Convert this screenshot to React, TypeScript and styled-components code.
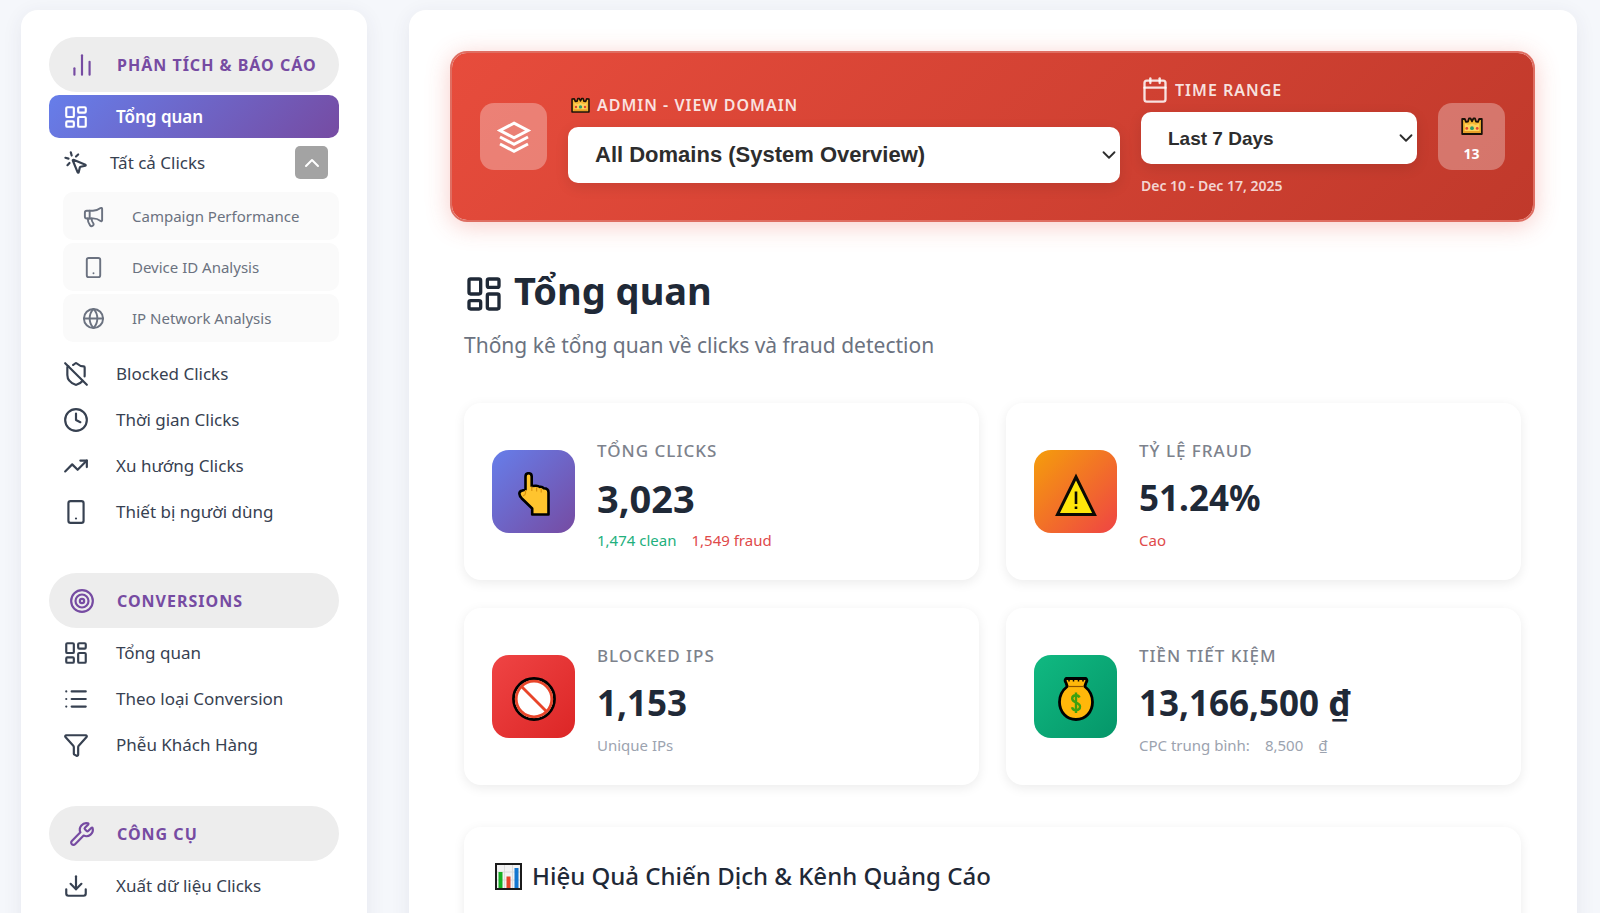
import React, { useState } from "react";
import styled, { createGlobalStyle, css } from "styled-components";
import {
  Calendar,
  ChartNoAxesColumn,
  ChevronDown,
  ChevronUp,
  Clock,
  Download,
  Funnel,
  Globe,
  LayoutDashboard,
  List,
  Megaphone,
  MousePointerClick,
  ShieldOff,
  Smartphone,
  Target,
  TrendingUp,
  Wrench,
} from "lucide-react";

const sans = `"Noto Sans", "Open Sans", sans-serif`;

const GlobalStyle = createGlobalStyle`
  *, *::before, *::after { box-sizing: border-box; }
  html, body { margin: 0; }
  body {
    background: #f5f7fb;
    color: #1f2937;
    font-family: ${sans};
    font-size: 16px;
  }
  ul, h1, h2, h3, p { margin: 0; padding: 0; }
  ul { list-style: none; }
`;

const Page = styled.div`
  display: flex;
  align-items: stretch;
  gap: 42px;
  min-height: 100vh;
  padding: 10px 23px 0 21px;
`;

const panel = css`
  background: #fff;
  border-radius: 17px 17px 0 0;
  box-shadow: 0 4px 20px rgba(50, 50, 90, 0.08);
`;

const Sidebar = styled.nav`
  ${panel}
  flex: 0 0 346px;
  padding: 27px 28px 0;
`;

const Section = styled.section`
  margin-bottom: 40px;
`;

const SectionTitle = styled.h2`
  display: flex;
  align-items: center;
  gap: 22px;
  height: 55px;
  margin-bottom: 3px;
  padding: 0 20px;
  border-radius: 28px;
  background: #ededed;
  color: #764ba2;
  font-size: 16px;
  font-weight: 700;
  letter-spacing: 1px;
  line-height: 24px;
  white-space: nowrap;
`;

const Menu = styled.ul`
  display: flex;
  flex-direction: column;
  gap: 3px;
`;

const MenuLink = styled.a<{ $active?: boolean }>`
  display: flex;
  align-items: center;
  gap: 27px;
  height: 43px;
  padding: 0 14px;
  border-radius: 10px;
  color: ${(p) => (p.$active ? "#fff" : "#374151")};
  background: ${(p) => (p.$active ? "linear-gradient(135deg, #667eea, #764ba2)" : "none")};
  font-size: 17px;
  font-weight: ${(p) => (p.$active ? 600 : 400)};
  line-height: 24px;
  text-decoration: none;
  white-space: nowrap;
`;

const GroupRow = styled.div`
  display: flex;
  align-items: center;
  justify-content: space-between;
  height: 43px;
  padding: 0 11px 0 14px;
`;

const GroupLink = styled.a`
  display: flex;
  align-items: center;
  gap: 21px;
  color: #374151;
  font-size: 17px;
  line-height: 24px;
  text-decoration: none;
`;

const Toggle = styled.button`
  display: flex;
  align-items: center;
  justify-content: center;
  width: 33px;
  height: 33px;
  padding: 0;
  border: 0;
  border-radius: 5px;
  background: #a3a3a3;
  color: #fff;
  cursor: pointer;
`;

const SubMenu = styled.ul`
  display: flex;
  flex-direction: column;
  gap: 3px;
  margin: 8px 0 7px 14px;
`;

const SubLink = styled.a`
  display: flex;
  align-items: center;
  gap: 27px;
  height: 48px;
  padding: 0 19px;
  border-radius: 10px;
  background: #fafafa;
  color: #6b7280;
  font-size: 15px;
  line-height: 24px;
  text-decoration: none;
  white-space: nowrap;
`;

const Main = styled.main`
  ${panel}
  flex: 1;
  min-width: 0;
  padding: 41px 42px 0 41px;
`;

const Banner = styled.section`
  display: flex;
  align-items: center;
  gap: 21px;
  padding: 23px 28px;
  border: 2px solid #df6e62;
  border-radius: 17px;
  background: linear-gradient(135deg, #e74c3c, #c0392b) padding-box;
  box-shadow: 0 4px 25px rgba(231, 76, 60, 0.28);
`;

const Tile = styled.div`
  display: flex;
  flex: none;
  flex-direction: column;
  align-items: center;
  justify-content: center;
  width: 67px;
  height: 67px;
  border-radius: 14px;
  background: rgba(255, 255, 255, 0.3);
  color: #fff;
`;

const TileCount = styled.span`
  font-size: 14px;
  font-weight: 700;
  line-height: 20px;
`;

const CountTile = styled(Tile)`
  gap: 9px;
  padding-top: 7px;
`;

const Field = styled.div<{ $grow: number }>`
  display: flex;
  flex: ${(p) => p.$grow} 1 0;
  flex-direction: column;
  min-width: 0;
`;

const FieldLabel = styled.label`
  display: flex;
  align-items: center;
  gap: 6px;
  height: 28px;
  margin-bottom: 8px;
  color: rgba(255, 255, 255, 0.85);
  font-size: 16px;
  font-weight: 600;
  letter-spacing: 1px;
  line-height: 24px;
`;

const SelectBox = styled.div`
  position: relative;
  display: flex;
  color: #2d2d2d;

  svg {
    position: absolute;
    top: calc(50% - 11px);
    right: 0;
    pointer-events: none;
  }
`;

const Select = styled.select<{ $large?: boolean }>`
  width: 100%;
  height: ${(p) => (p.$large ? 56 : 52)}px;
  padding: 0 27px;
  border: 0;
  border-radius: 10px;
  appearance: none;
  background: #fff;
  box-shadow: 0 4px 14px rgba(0, 0, 0, 0.1);
  color: inherit;
  font-family: "Liberation Sans", Arial, sans-serif;
  font-size: ${(p) => (p.$large ? 22 : 19)}px;
  font-weight: 700;
`;

const FieldHint = styled.p`
  margin-top: 11px;
  color: rgba(255, 255, 255, 0.8);
  font-size: 14px;
  font-weight: 600;
  line-height: 22px;
`;

const Content = styled.div`
  padding: 44px 14px 0;
`;

const PageTitle = styled.h1`
  display: flex;
  align-items: flex-end;
  gap: 10px;
  font-size: 38px;
  font-weight: 700;
  line-height: 48px;
`;

const Subtitle = styled.p`
  margin-top: 15px;
  color: #6b7280;
  font-size: 21px;
  line-height: 32px;
`;

const Stats = styled.div`
  display: grid;
  grid-template-columns: 1fr 1fr;
  gap: 28px 27px;
  margin-top: 42px;
`;

const Card = styled.article`
  display: flex;
  align-items: center;
  gap: 22px;
  padding: 28px;
  border-radius: 17px;
  background: #fff;
  box-shadow: 0 3px 12px rgba(0, 0, 0, 0.08);
`;

const CardIcon = styled.div<{ $from: string; $to: string }>`
  display: flex;
  flex: none;
  align-items: center;
  justify-content: center;
  width: 83px;
  height: 83px;
  padding-top: 5px;
  border-radius: 17px;
  background: linear-gradient(135deg, ${(p) => p.$from}, ${(p) => p.$to});
`;

const CardInfo = styled.div`
  min-width: 0;
  padding-top: 8px;
`;

const CardLabel = styled.h3`
  color: #7d828c;
  font-size: 17px;
  font-weight: 500;
  letter-spacing: 1px;
  line-height: 24px;
`;

const CardValue = styled.p<{ $large?: boolean }>`
  margin: 12px 0 7px;
  font-size: ${(p) => (p.$large ? 38 : 35)}px;
  font-weight: 700;
  line-height: 46px;
`;

const CardDetails = styled.p`
  display: flex;
  gap: 15px;
  color: #9ca3af;
  font-size: 15px;
  line-height: 24px;
`;

const Detail = styled.span<{ $color?: string }>`
  color: ${(p) => p.$color ?? "inherit"};
`;

const Report = styled.section`
  margin-top: 42px;
  padding: 32px 31px;
  min-height: 140px;
  border-radius: 17px;
  background: #fff;
  box-shadow: 0 3px 12px rgba(0, 0, 0, 0.08);
`;

const ReportTitle = styled.h2`
  display: flex;
  align-items: center;
  gap: 10px;
  font-size: 24px;
  font-weight: 500;
  line-height: 34px;
`;

const LayersIcon = () => (
  <svg width="36" height="36" viewBox="0 0 36 36" fill="none" stroke="currentColor" strokeWidth="3" aria-hidden="true">
    <path d="M18 4.2 32 11.500 18 18.800 4 11.500z" />
    <path d="m4 18 14 7.300L32 18" />
    <path d="m4 25 14 7.300L32 25" />
  </svg>
);

const CrownIcon = ({ size }: { size: number }) => (
  <svg width={size} height={Math.round(size * 0.82)} viewBox="0 0 22 18" aria-hidden="true">
    <path
      d="M1.200 2v15h19.600V2l-2.600-.2-1.200 3-2-.2-1-3.200h-1.500l-1.500 3-1.500-3H8l-1 3.200-2 .2-1.200-3z"
      fill="#f7b733"
      stroke="#1b1208"
      strokeWidth="1.800"
      strokeLinejoin="round"
    />
    <path d="M4 6.500 7.500 8 11 6.500 14.500 8 18 6.500V14H4z" fill="#fdd35c" />
    <path d="M3 15h16" stroke="#d98a1f" strokeWidth="1" />
    <circle cx="11" cy="11.200" r="1.900" fill="#2f9a6a" />
    <circle cx="5.800" cy="11.400" r="1.400" fill="#e2452f" />
    <circle cx="16.200" cy="11.400" r="1.400" fill="#e2452f" />
  </svg>
);

const LabelCrown = styled.span`
  display: flex;
  padding: 0 1px 0 3px;
`;

const HandIcon = () => (
  <svg width="32" height="44" viewBox="0 0 32 44" aria-hidden="true">
    <path
      d="M7.500 4.400c0-4.200 6.200-4.200 6.200 0V14l4-.3c1.800-.1 3 .3 4 1.200 1.600-.3 3 .1 4 1.400 2.800 0 4.800 1.600 4.800 4.200v22H14.200v-6L3.600 26.200c-1.300-1.400-2-2.500-2.200-4.400-.2-2 1.200-3 3-3.400l3.100-.9z"
      fill="#ffc42e"
      stroke="#000"
      strokeWidth="2.600"
      strokeLinejoin="round"
    />
    <path d="M13.800 14.500v4.500M18.600 15.500v4M23.200 16.500v4" stroke="#d9920f" strokeWidth="1.200" />
    <path d="M7.500 18v3c0 1.500-1 2.400-2.400 2.800" fill="none" stroke="#d9920f" strokeWidth="1.200" />
  </svg>
);

const WarningIcon = () => (
  <svg width="44" height="44" viewBox="0 0 44 44" aria-hidden="true">
    <path d="M22 5 40.500 42.500H3.500z" fill="#ffe60a" stroke="#0c0a04" strokeWidth="3" />
    <path d="M22 19.500v12.500M22 34.500v2.500" stroke="#0c0a04" strokeWidth="2.600" />
  </svg>
);

const ProhibitedIcon = () => (
  <svg width="44" height="44" viewBox="0 0 44 44" aria-hidden="true">
    <circle cx="22" cy="22" r="20.500" fill="#fff" stroke="#000" strokeWidth="2.800" />
    <circle cx="22" cy="22" r="17.800" fill="none" stroke="#e8452a" strokeWidth="2.800" />
    <path d="m9.500 9.500 25 25" stroke="#e8452a" strokeWidth="2.800" />
  </svg>
);

const MoneyBagIcon = () => (
  <svg width="36" height="44" viewBox="0 0 36 44" aria-hidden="true">
    <path
      d="M8 1.500h20c1.200 1.200 1 3-.1 4.500L26.800 9.500c4.400 3.500 7.700 9 7.700 15.500 0 10-7 17.500-16.500 17.500S1.500 35 1.500 25c0-6.500 3.300-12 7.700-15.500L8.100 6c-1.100-1.500-1.300-3.300-.1-4.500z"
      fill="#ffb70a"
      stroke="#000"
      strokeWidth="2.800"
      strokeLinejoin="round"
    />
    <path d="M10 9.500h16" stroke="#8a5200" strokeWidth="1.200" />
    <path d="M11 2.500v2M15.500 2.500v2M20.500 2.500v2M25 2.500v2" stroke="#000" strokeWidth="1.500" />
    <path
      d="M21.500 20.500c-.6-1.700-2-2.300-3.500-2.300-2.200 0-3.800 1.300-3.800 3.400 0 5 7.800 2.800 7.800 8 0 2.300-1.800 3.600-4 3.600-2 0-3.500-1-4-3M18 15.500v20.500"
      fill="none"
      stroke="#3da010"
      strokeWidth="2.400"
    />
  </svg>
);

const BarChartIcon = () => (
  <svg width="27" height="27" viewBox="0 0 27 27" aria-hidden="true">
    <rect x="1" y="1" width="25" height="25" fill="#f3f3f3" stroke="#1b1b1b" strokeWidth="2" />
    <path d="M2 9h23M2 17h23M9.500 2v23M17.500 2v23" stroke="#dcdcdc" strokeWidth="1" />
    <rect x="3.500" y="9" width="4" height="16" fill="#16b023" />
    <rect x="11.500" y="13.500" width="4" height="11.500" fill="#e8452a" />
    <rect x="19.500" y="5" width="4" height="20" fill="#1577d0" />
  </svg>
);

const subItems = [
  { label: "Campaign Performance", Icon: Megaphone },
  { label: "Device ID Analysis", Icon: Smartphone },
  { label: "IP Network Analysis", Icon: Globe },
];

const clickItems = [
  { label: "Blocked Clicks", Icon: ShieldOff },
  { label: "Thời gian Clicks", Icon: Clock },
  { label: "Xu hướng Clicks", Icon: TrendingUp },
  { label: "Thiết bị người dùng", Icon: Smartphone },
];

const conversionItems = [
  { label: "Tổng quan", Icon: LayoutDashboard },
  { label: "Theo loại Conversion", Icon: List },
  { label: "Phễu Khách Hàng", Icon: Funnel },
];

type Item = { label: string; Icon: React.ElementType };

const MenuItem = ({ label, Icon, active }: Item & { active?: boolean }) => (
  <li>
    <MenuLink href="#" $active={active} aria-current={active ? "page" : undefined}>
      <Icon size={26} aria-hidden="true" />
      {label}
    </MenuLink>
  </li>
);

export default function App() {
  const [open, setOpen] = useState(true);

  return (
    <>
      <GlobalStyle />
      <Page>
        <Sidebar>
          <Section>
            <SectionTitle>
              <ChartNoAxesColumn size={26} aria-hidden="true" />
              PHÂN TÍCH &amp; BÁO CÁO
            </SectionTitle>
            <Menu>
              <MenuItem label="Tổng quan" Icon={LayoutDashboard} active />
              <li>
                <GroupRow>
                  <GroupLink href="#">
                    <MousePointerClick size={26} aria-hidden="true" />
                    Tất cả Clicks
                  </GroupLink>
                  <Toggle type="button" aria-label="Tất cả Clicks" aria-expanded={open} onClick={() => setOpen(!open)}>
                    <ChevronUp size={24} aria-hidden="true" />
                  </Toggle>
                </GroupRow>
                {open && (
                  <SubMenu>
                    {subItems.map(({ label, Icon }) => (
                      <li key={label}>
                        <SubLink href="#">
                          <Icon size={23} aria-hidden="true" />
                          {label}
                        </SubLink>
                      </li>
                    ))}
                  </SubMenu>
                )}
              </li>
              {clickItems.map((item) => (
                <MenuItem key={item.label} {...item} />
              ))}
            </Menu>
          </Section>

          <Section>
            <SectionTitle>
              <Target size={26} aria-hidden="true" />
              CONVERSIONS
            </SectionTitle>
            <Menu>
              {conversionItems.map((item) => (
                <MenuItem key={item.label} {...item} />
              ))}
            </Menu>
          </Section>

          <Section>
            <SectionTitle>
              <Wrench size={26} aria-hidden="true" />
              CÔNG CỤ
            </SectionTitle>
            <Menu>
              <MenuItem label="Xuất dữ liệu Clicks" Icon={Download} />
            </Menu>
          </Section>
        </Sidebar>

        <Main>
          <Banner>
            <Tile>
              <LayersIcon />
            </Tile>
            <Field $grow={2}>
              <FieldLabel htmlFor="domain">
                <LabelCrown>
                  <CrownIcon size={19} />
                </LabelCrown>
                ADMIN - VIEW DOMAIN
              </FieldLabel>
              <SelectBox>
                <Select id="domain" $large>
                  <option>All Domains (System Overview)</option>
                </Select>
                <ChevronDown size={22} strokeWidth={2} aria-hidden="true" />
              </SelectBox>
            </Field>
            <Field $grow={1}>
              <FieldLabel htmlFor="range">
                <Calendar size={28} aria-hidden="true" />
                TIME RANGE
              </FieldLabel>
              <SelectBox>
                <Select id="range">
                  <option>Last 7 Days</option>
                </Select>
                <ChevronDown size={22} strokeWidth={2} aria-hidden="true" />
              </SelectBox>
              <FieldHint>Dec 10 - Dec 17, 2025</FieldHint>
            </Field>
            <CountTile>
              <CrownIcon size={22} />
              <TileCount>13</TileCount>
            </CountTile>
          </Banner>

          <Content>
            <PageTitle>
              <LayoutDashboard size={40} aria-hidden="true" />
              Tổng quan
            </PageTitle>
            <Subtitle>Thống kê tổng quan về clicks và fraud detection</Subtitle>

            <Stats>
              <Card>
                <CardIcon $from="#667eea" $to="#764ba2">
                  <HandIcon />
                </CardIcon>
                <CardInfo>
                  <CardLabel>TỔNG CLICKS</CardLabel>
                  <CardValue $large>3,023</CardValue>
                  <CardDetails>
                    <Detail $color="#22b07d">1,474 clean</Detail>
                    <Detail $color="#e04a4a">1,549 fraud</Detail>
                  </CardDetails>
                </CardInfo>
              </Card>
              <Card>
                <CardIcon $from="#f59e0b" $to="#ef4444">
                  <WarningIcon />
                </CardIcon>
                <CardInfo>
                  <CardLabel>TỶ LỆ FRAUD</CardLabel>
                  <CardValue>51.24%</CardValue>
                  <CardDetails>
                    <Detail $color="#e04a4a">Cao</Detail>
                  </CardDetails>
                </CardInfo>
              </Card>
              <Card>
                <CardIcon $from="#ef4444" $to="#dc2626">
                  <ProhibitedIcon />
                </CardIcon>
                <CardInfo>
                  <CardLabel>BLOCKED IPS</CardLabel>
                  <CardValue>1,153</CardValue>
                  <CardDetails>
                    <Detail>Unique IPs</Detail>
                  </CardDetails>
                </CardInfo>
              </Card>
              <Card>
                <CardIcon $from="#10b981" $to="#059669">
                  <MoneyBagIcon />
                </CardIcon>
                <CardInfo>
                  <CardLabel>TIỀN TIẾT KIỆM</CardLabel>
                  <CardValue>13,166,500 ₫</CardValue>
                  <CardDetails>
                    <Detail>CPC trung bình:</Detail>
                    <Detail>8,500</Detail>
                    <Detail>₫</Detail>
                  </CardDetails>
                </CardInfo>
              </Card>
            </Stats>

            <Report>
              <ReportTitle>
                <BarChartIcon />
                Hiệu Quả Chiến Dịch &amp; Kênh Quảng Cáo
              </ReportTitle>
            </Report>
          </Content>
        </Main>
      </Page>
    </>
  );
}
